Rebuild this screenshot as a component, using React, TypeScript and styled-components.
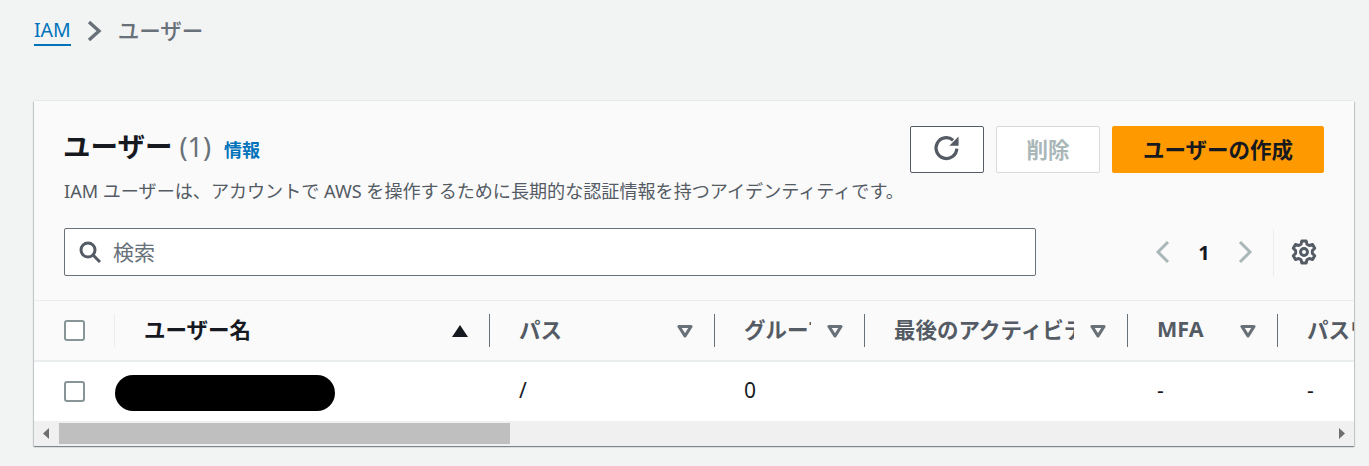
import styled, { createGlobalStyle } from "styled-components";

const GlobalStyle = createGlobalStyle`
  html, body {
    margin: 0;
    padding: 0;
    background: #f2f3f3;
    overflow: hidden;
  }
  * {
    box-sizing: border-box;
  }
  body {
    font-family: "Noto Sans", "Noto Sans CJK JP", sans-serif;
    color: #16191f;
  }
`;

const Page = styled.div`
  width: 1369px;
  height: 466px;
  padding: 14px 15px 0 34px;
`;

const Breadcrumbs = styled.nav`
  display: flex;
  align-items: center;
  height: 33px;
  margin-bottom: 54px;
  font-size: 19.5px;
`;

const CrumbLink = styled.a`
  color: #0073bb;
  border-bottom: 2px solid #0073bb;
  line-height: 29px;
  height: 31px;
`;

const CrumbSep = styled.svg`
  width: 16px;
  height: 22px;
  margin: 0 15px 0 16px;
  fill: none;
  stroke: #687078;
  stroke-width: 3.4;
`;

const CrumbCurrent = styled.span`
  color: #687078;
  font-weight: 500;
  font-size: 21.5px;
  line-height: 33px;
`;

const Card = styled.section`
  height: 345px;
  background: #fff;
  box-shadow: 0 1px 1px 0 rgba(0, 28, 36, 0.3), 1px 1px 1px 0 rgba(0, 28, 36, 0.15), -1px 1px 1px 0 rgba(0, 28, 36, 0.15),
    0 -1px 1px 0 rgba(0, 28, 36, 0.04);
  overflow: hidden;
`;

const CardHeader = styled.header`
  height: 200px;
  padding: 25px 30px 0 30px;
  background: #fafafa;
  border-bottom: 1px solid #eaeded;
`;

const TitleRow = styled.div`
  display: flex;
  justify-content: space-between;
  align-items: flex-start;
`;

const TitleBlock = styled.div`
  display: flex;
  flex-direction: column;
`;

const TitleLine = styled.div`
  display: flex;
  align-items: baseline;
  height: 42px;
  margin-left: -1px;
`;

const Title = styled.h1`
  margin: 0;
  font-size: 27.5px;
  line-height: 42px;
  font-weight: 700;
`;

const Count = styled.span`
  margin-left: 7px;
  font-size: 27px;
  color: #687078;
`;

const InfoLink = styled.a`
  margin-left: 13px;
  font-size: 18px;
  font-weight: 700;
  color: #0073bb;
`;

const Description = styled.p`
  margin: 10px 0 0;
  font-size: 18.08px;
  line-height: 26px;
  color: #545b64;
  white-space: nowrap;
  width: 0;
`;

const Actions = styled.div`
  display: flex;
  gap: 12px;
`;

const Button = styled.button<{ $variant?: "primary" | "disabled" | "normal"; $width: number }>`
  width: ${(p) => p.$width}px;
  height: 47px;
  padding: 0 0 3px;
  display: flex;
  align-items: center;
  justify-content: center;
  border-radius: 2px;
  font-family: inherit;
  font-size: 21.5px;
  font-weight: 700;
  border: 1px solid
    ${(p) => (p.$variant === "primary" ? "#ff9900" : p.$variant === "disabled" ? "#d5dbdb" : "#545b64")};
  background: ${(p) => (p.$variant === "primary" ? "#ff9900" : "#fff")};
  color: ${(p) => (p.$variant === "disabled" ? "#aab7b8" : "#16191f")};
`;

const ToolRow = styled.div`
  display: flex;
  justify-content: space-between;
  align-items: center;
  margin-top: 24px;
`;

const SearchBox = styled.div`
  width: 972px;
  height: 48px;
  display: flex;
  align-items: center;
  gap: 12px;
  padding-left: 14px;
  background: #fff;
  border: 1px solid #687078;
  border-radius: 2px;
  font-size: 21px;
  color: #687078;
`;

const SearchText = styled.span`
  padding-bottom: 3px;
`;

const Pager = styled.div`
  display: flex;
  align-items: center;
  height: 48px;
  margin-right: 7px;
`;

const PagerChevron = styled.svg`
  width: 18px;
  height: 24px;
  fill: none;
  stroke: #aab7b8;
  stroke-width: 3;
`;

const PageNumber = styled.span`
  width: 64px;
  text-align: center;
  font-size: 20px;
  font-weight: 700;
`;

const PagerDivider = styled.div`
  width: 1px;
  height: 47px;
  margin: 0 17px 0 19px;
  background: #eaeded;
`;

const COLUMNS = "80px 375px 225px 150px 263px 150px 320px";

const HeadRow = styled.div`
  display: grid;
  grid-template-columns: ${COLUMNS};
  height: 61px;
  background: #fafafa;
  border-bottom: 2px solid #eaeded;
  align-items: center;
`;

const BodyRow = styled.div`
  display: grid;
  grid-template-columns: ${COLUMNS};
  height: 59px;
  background: #fff;
  align-items: center;
`;

const CheckCell = styled.div`
  display: flex;
  justify-content: center;
  padding-left: 1px;
`;

const Checkbox = styled.span`
  display: block;
  width: 21px;
  height: 21px;
  background: #fff;
  border: 2px solid #879596;
  border-radius: 3px;
`;

const HeadCell = styled.div<{ $active?: boolean; $lightRule?: boolean }>`
  display: flex;
  align-items: center;
  height: 33px;
  padding: 0 21px 0 29px;
  border-left: 1px solid ${(p) => (p.$lightRule ? "#eaeded" : "#687078")};
  font-size: 21.5px;
  font-weight: 700;
  color: ${(p) => (p.$active ? "#16191f" : "#545b64")};
  white-space: nowrap;
  overflow: hidden;
`;

const HeadLabel = styled.span`
  overflow: hidden;
  min-width: 0;
  flex: 1;
  padding-bottom: 4px;
`;

const SortIcon = styled.svg`
  flex: none;
  width: 16px;
  height: 14px;
  margin-left: 16px;
`;

const BodyCell = styled.div`
  padding: 0 0 4px 30px;
  font-size: 21px;
  color: #16191f;
`;

const Redacted = styled.div`
  width: 220px;
  height: 36px;
  margin: 3px 0 0 1px;
  border-radius: 18px;
  background: #000;
`;

const ScrollBar = styled.div`
  display: flex;
  align-items: center;
  height: 25px;
  background: #f0f0f0;
  padding: 0 0 0 25px;
  position: relative;
`;

const ScrollThumb = styled.div`
  width: 451px;
  height: 21px;
  background: #bfbfbf;
`;

const ScrollArrow = styled.svg<{ $side: "left" | "right" }>`
  position: absolute;
  ${(p) => p.$side}: 8px;
  top: 7px;
  width: 8px;
  height: 11px;
  fill: #6f6f6f;
`;

function SortDown() {
  return (
    <SortIcon viewBox="0 0 16 14">
      <path d="M2 2.5h12L8 12z" fill="none" stroke="#687078" strokeWidth="3.2" strokeLinejoin="round" />
    </SortIcon>
  );
}

function SortUp() {
  return (
    <SortIcon viewBox="0 0 16 14">
      <path d="M8 1l8 12H0z" fill="#16191f" />
    </SortIcon>
  );
}

const columns = ["パス", "グループ", "最後のアクティビティ", "MFA", "パスワード"];

export default function App() {
  return (
    <Page>
      <GlobalStyle />
      <Breadcrumbs>
        <CrumbLink>IAM</CrumbLink>
        <CrumbSep viewBox="0 0 16 22">
          <path d="M2 2l10 9-10 9" />
        </CrumbSep>
        <CrumbCurrent>ユーザー</CrumbCurrent>
      </Breadcrumbs>
      <Card>
        <CardHeader>
          <TitleRow>
            <TitleBlock>
              <TitleLine>
                <Title>ユーザー</Title>
                <Count>(1)</Count>
                <InfoLink>情報</InfoLink>
              </TitleLine>
              <Description>IAM ユーザーは、アカウントで AWS を操作するために長期的な認証情報を持つアイデンティティです。</Description>
            </TitleBlock>
            <Actions>
              <Button $width={74}>
                <svg width="30" height="30" viewBox="0 0 26 26" fill="none">
                  <path d="M21.5 13.5a9 9 0 1 1-3.2-7.3" stroke="#545b64" strokeWidth="2.8" />
                  <path d="M23 3v8h-8z" fill="#545b64" />
                </svg>
              </Button>
              <Button $width={104} $variant="disabled">削除</Button>
              <Button $width={212} $variant="primary">ユーザーの作成</Button>
            </Actions>
          </TitleRow>
          <ToolRow>
            <SearchBox>
              <svg width="22" height="22" viewBox="0 0 22 22" fill="none" stroke="#545b64" strokeWidth="3">
                <circle cx="9" cy="9" r="7" />
                <path d="M14 14l7 7" />
              </svg>
              <SearchText>検索</SearchText>
            </SearchBox>
            <Pager>
              <PagerChevron viewBox="0 0 18 24">
                <path d="M14 2L4 12l10 10" />
              </PagerChevron>
              <PageNumber>1</PageNumber>
              <PagerChevron viewBox="0 0 18 24">
                <path d="M4 2l10 10L4 22" />
              </PagerChevron>
              <PagerDivider />
              <svg width="26" height="26" viewBox="0 0 24 24" fill="none" stroke="#545b64" strokeWidth="2.7" strokeLinejoin="round">
                <circle cx="12" cy="12" r="3.2" />
                <path d="M10 1.8h4l.7 3 2.2 1.2 3-.9 2 3.5-2.2 2.1v2.6l2.2 2.1-2 3.5-3-.9-2.2 1.2-.7 3h-4l-.7-3-2.2-1.2-3 .9-2-3.5 2.2-2.1v-2.6L2.1 8.6l2-3.5 3 .9 2.2-1.2z" />
              </svg>
            </Pager>
          </ToolRow>
        </CardHeader>
        <HeadRow>
          <CheckCell>
            <Checkbox />
          </CheckCell>
          <HeadCell $active $lightRule>
            <HeadLabel>ユーザー名</HeadLabel>
            <SortUp />
          </HeadCell>
          {columns.map((c) => (
            <HeadCell key={c}>
              <HeadLabel>{c}</HeadLabel>
              <SortDown />
            </HeadCell>
          ))}
        </HeadRow>
        <BodyRow>
          <CheckCell>
            <Checkbox />
          </CheckCell>
          <div>
            <Redacted />
          </div>
          <BodyCell>/</BodyCell>
          <BodyCell>0</BodyCell>
          <BodyCell />
          <BodyCell>-</BodyCell>
          <BodyCell>-</BodyCell>
        </BodyRow>
        <ScrollBar>
          <ScrollArrow $side="left" viewBox="0 0 8 11">
            <path d="M7 0v11L1 5.5z" />
          </ScrollArrow>
          <ScrollThumb />
          <ScrollArrow $side="right" viewBox="0 0 8 11">
            <path d="M1 0v11l6-5.5z" />
          </ScrollArrow>
        </ScrollBar>
      </Card>
    </Page>
  );
}
